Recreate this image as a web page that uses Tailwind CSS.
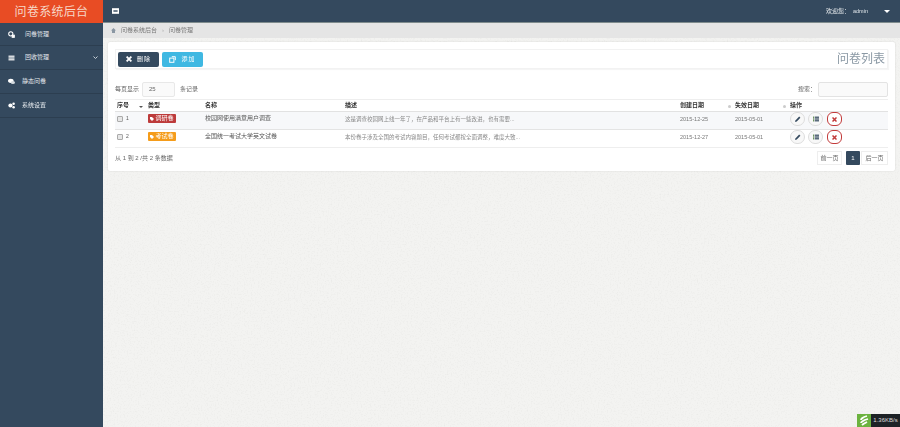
<!DOCTYPE html>
<html lang="zh">
<head>
  <meta charset="UTF-8" />
  <title>问卷系统后台</title>
  <script src="https://cdn.jsdelivr.net/npm/@tailwindcss/browser@4"></script>
</head>
<body class="bg-[#f3f3f1] text-[#555] font-['Liberation_Sans','Noto_Sans_CJK_SC',sans-serif] overflow-hidden">
  <!-- 背景纹理 -->
  <svg class="fixed inset-0 w-[900px] h-[427px]" xmlns="http://www.w3.org/2000/svg">
    <filter id="grain"><feTurbulence type="fractalNoise" baseFrequency="0.7" numOctaves="2" seed="4"/><feColorMatrix values="0 0 0 0 0.55  0 0 0 0 0.55  0 0 0 0 0.53  0 0 0 1.1 -0.55"/></filter>
    <rect width="900" height="427" filter="url(#grain)" opacity="0.35"/>
  </svg>

  <div class="relative flex w-[900px] h-[427px]">

    <!-- 侧边栏 -->
    <aside class="w-[103px] shrink-0 bg-[#34495e] text-[#e6eaee] text-[6px]">
      <div class="h-[23px] bg-[#e84c24] flex items-center justify-center text-[12px] tracking-[0.3px] text-[#f6d8c8] font-['Liberation_Serif','Noto_Sans_CJK_SC',serif]">问卷系统后台</div>
      <div class="h-[23px] flex items-center pl-[8px] gap-[10px] border-b border-[#2c3e50]">
        <svg class="w-[7px] h-[7px]" viewBox="0 0 10 10" fill="none" stroke="#fff" stroke-width="1.5"><circle cx="4" cy="4" r="3"/><rect x="6" y="6" width="3" height="3" fill="#fff"/></svg>
        <span>问卷管理</span>
      </div>
      <div class="h-[24px] flex items-center pl-[8px] pr-[5px] gap-[10px] border-b border-[#2c3e50]">
        <svg class="w-[7px] h-[6px]" viewBox="0 0 10 10" fill="#fff"><rect y="1" width="10" height="2"/><rect y="4" width="10" height="2"/><rect y="7" width="10" height="2"/></svg>
        <span>回收管理</span>
        <svg class="w-[5px] h-[5px] ml-auto" viewBox="0 0 10 10" fill="none" stroke="#c5ced6" stroke-width="2"><path d="M1 3l4 4 4-4"/></svg>
      </div>
      <div class="h-[24px] flex items-center pl-[8px] gap-[7px] border-b border-[#2c3e50]">
        <svg class="w-[7px] h-[7px]" viewBox="0 0 10 10" fill="#fff"><ellipse cx="4" cy="4" rx="4" ry="3"/><ellipse cx="7" cy="6.5" rx="3" ry="2.2" fill="#d5dbe0"/></svg>
        <span>静态问卷</span>
      </div>
      <div class="h-[24px] flex items-center pl-[8px] gap-[7px] border-b border-[#2c3e50]">
        <svg class="w-[7px] h-[7px]" viewBox="0 0 10 10" fill="#fff"><circle cx="3.5" cy="5" r="3"/><circle cx="8" cy="2.5" r="1.8"/><circle cx="8" cy="7.5" r="1.8"/></svg>
        <span>系统设置</span>
      </div>
    </aside>

    <div class="flex-1 min-w-0 flex flex-col">
      <!-- 顶栏 -->
      <header class="h-[23px] bg-[#34495e] border-b border-[#7f8c8d] flex items-center pl-[9px] text-[#eef1f3] text-[6px]">
        <svg class="w-[7px] h-[6px]" viewBox="0 0 10 8" fill="#fff"><rect width="10" height="8"/><rect x="2" y="3" width="6" height="2" fill="#34495e"/></svg>
        <span class="ml-auto">欢迎您：</span>
        <span class="ml-[3px] text-[#dfe5ea] w-[31px] text-[5.5px]">admin</span>
        <span class="w-0 h-0 mr-[10px] border-x-[3px] border-x-transparent border-t-[3px] border-t-white"></span>
      </header>

      <!-- 面包屑 -->
      <div class="h-[15px] bg-[#e5e5e5] flex items-center pl-[8px] gap-[5px] text-[6px] text-[#777]">
        <svg class="w-[5px] h-[5px]" viewBox="0 0 10 10" fill="#8a97a3"><path d="M5 0L0 5h2v5h6V5h2z"/></svg>
        <span>问卷系统后台</span>
        <span class="text-[#aaa]">›</span>
        <span>问卷管理</span>
      </div>

      <main class="pt-[4px] pl-[5px] pr-[5px]">
        <div class="h-[129px] bg-white rounded-[2px] shadow-[0_0_2px_rgba(0,0,0,0.12)] px-[7px] pt-[7px]">

          <!-- 工具栏 -->
          <div class="h-[20px] flex items-center pl-[2px] pr-[2px] gap-[3px] border border-[#f2f2f2] shadow-[1px_1px_1px_rgba(0,0,0,0.04)]">
            <button class="w-[41px] h-[15px] bg-[#34495e] rounded-[2px] text-white text-[6px] flex items-center justify-center gap-[5px]">
              <svg class="w-[6px] h-[6px]" viewBox="0 0 10 10" stroke="#fff" stroke-width="3"><path d="M1 1l8 8M9 1l-8 8"/></svg>
              <span class="tracking-[1px]">删除</span>
            </button>
            <button class="w-[41px] h-[15px] bg-[#3fb8e2] rounded-[2px] text-white text-[6px] flex items-center justify-center gap-[5px]">
              <svg class="w-[7px] h-[7px]" viewBox="0 0 10 10" fill="none" stroke="#fff" stroke-width="1.4"><rect x="1" y="3" width="6" height="6"/><path d="M4 1h5v5"/></svg>
              <span class="tracking-[1px]">添加</span>
            </button>
            <h2 class="ml-auto text-[12px] text-[#8a98a4] font-normal">问卷列表</h2>
          </div>

          <!-- 每页显示 / 搜索 -->
          <div class="h-[17px] mt-[12px] flex items-center text-[6px] text-[#666]">
            <span class="w-[27px]">每页显示</span>
            <span class="w-[33px] h-[15px] pl-[6px] flex items-center border border-[#e8e8e8] rounded-[2px] bg-[#fafafa]">25</span>
            <span class="ml-[5px]">条记录</span>
            <span class="ml-auto">搜索：</span>
            <span class="ml-[2px] w-[70px] h-[15px] border border-[#e3e3e3] rounded-[2px] bg-[#fafafa]"></span>
          </div>

          <!-- 表格 -->
          <table class="w-full table-fixed mt-[1px] text-[6px] border-t border-[#eee]">
            <thead>
              <tr class="h-[12px] border-b border-[#e2e2e2] text-left text-[#333]">
                <th class="w-[33px] pl-[2px] font-bold relative">序号<span class="absolute right-[5px] top-[6px] w-0 h-0 border-x-[2px] border-x-transparent border-t-[2px] border-t-[#555]"></span></th>
                <th class="w-[57px] font-bold">类型</th>
                <th class="w-[140px] font-bold">名称</th>
                <th class="w-[335px] font-bold">描述</th>
                <th class="w-[55px] font-bold relative">创建日期<span class="absolute right-[4px] top-[5px] w-[3px] h-[3px] rounded-full bg-[#ccc]"></span></th>
                <th class="w-[55px] font-bold relative">失效日期<span class="absolute right-[4px] top-[5px] w-[3px] h-[3px] rounded-full bg-[#ccc]"></span></th>
                <th class="font-bold">操作</th>
              </tr>
            </thead>
            <tbody>
              <tr class="h-[18px] bg-[#f7f8fa] border-b border-[#e4e4e4] align-top">
                <td class="pl-[2px] pt-[3px]"><span class="inline-flex items-center gap-[3px]"><span class="w-[6px] h-[6px] border border-[#aaa] rounded-[1px] bg-[#e6e6e6]"></span><span class="text-[5px]">1</span></span></td>
                <td class="pt-[2px]">
                  <span class="inline-flex w-[28px] h-[9px] items-center justify-center gap-[1px] rounded-[1px] bg-[#bd3b3b] text-white text-[6px]">
                    <svg class="w-[4px] h-[4px]" viewBox="0 0 10 10" fill="#fff"><path d="M0 0h5l5 5-5 5-5-5z"/></svg>调研卷
                  </span>
                </td>
                <td class="pt-[2px] text-[#555]">校园网使用满意用户调查</td>
                <td class="pt-[3px] text-[5.5px] text-[#888]">这是调查校园网上线一年了，在产品和平台上有一些改进，也有需要...</td>
                <td class="pt-[3px] text-[5.5px] text-[#777]">2015-12-25</td>
                <td class="pt-[3px] text-[5.5px] text-[#777]">2015-05-01</td>
                <td>
                  <div class="flex items-center gap-[3px]">
                    <span class="w-[15px] h-[14px] rounded-full border border-[#ddd] bg-[#f8f8f8] flex items-center justify-center">
                      <svg class="w-[6px] h-[6px]" viewBox="0 0 10 10" fill="#34495e"><path d="M7 1l2 2-6 6-3 1 1-3z"/></svg>
                    </span>
                    <span class="w-[15px] h-[14px] rounded-full border border-[#ddd] bg-[#f8f8f8] flex items-center justify-center">
                      <svg class="w-[6px] h-[6px]" viewBox="0 0 10 10" fill="#34495e"><rect y="1" width="2" height="2" fill="#4a7a3a"/><rect x="3" y="1" width="7" height="2"/><rect y="4" width="2" height="2" fill="#4a7a3a"/><rect x="3" y="4" width="7" height="2"/><rect y="7" width="2" height="2" fill="#4a7a3a"/><rect x="3" y="7" width="7" height="2"/></svg>
                    </span>
                    <span class="ml-[1px] w-[15px] h-[14px] rounded-[6px] border border-[#c23a3a] bg-white flex items-center justify-center">
                      <svg class="w-[5px] h-[5px]" viewBox="0 0 10 10" stroke="#c23a3a" stroke-width="3"><path d="M1 1l8 8M9 1l-8 8"/></svg>
                    </span>
                  </div>
                </td>
              </tr>
              <tr class="h-[18px] border-b border-[#eee] align-top">
                <td class="pl-[2px] pt-[3px]"><span class="inline-flex items-center gap-[3px]"><span class="w-[6px] h-[6px] border border-[#aaa] rounded-[1px] bg-[#e6e6e6]"></span><span class="text-[5px]">2</span></span></td>
                <td class="pt-[2px]">
                  <span class="inline-flex w-[28px] h-[9px] items-center justify-center gap-[1px] rounded-[1px] bg-[#f59c1a] text-white text-[6px]">
                    <svg class="w-[4px] h-[4px]" viewBox="0 0 10 10" fill="#fff"><path d="M0 0h5l5 5-5 5-5-5z"/></svg>考试卷
                  </span>
                </td>
                <td class="pt-[2px] text-[#555]">全国统一考试大学英文试卷</td>
                <td class="pt-[3px] text-[5.5px] text-[#888]">本份卷子涉及全国的考试内容题目，任何考试都按全面调整，难度大致...</td>
                <td class="pt-[3px] text-[5.5px] text-[#777]">2015-12-27</td>
                <td class="pt-[3px] text-[5.5px] text-[#777]">2015-05-01</td>
                <td>
                  <div class="flex items-center gap-[3px]">
                    <span class="w-[15px] h-[14px] rounded-full border border-[#ddd] bg-[#f8f8f8] flex items-center justify-center">
                      <svg class="w-[6px] h-[6px]" viewBox="0 0 10 10" fill="#34495e"><path d="M7 1l2 2-6 6-3 1 1-3z"/></svg>
                    </span>
                    <span class="w-[15px] h-[14px] rounded-full border border-[#ddd] bg-[#f8f8f8] flex items-center justify-center">
                      <svg class="w-[6px] h-[6px]" viewBox="0 0 10 10" fill="#34495e"><rect y="1" width="2" height="2" fill="#4a7a3a"/><rect x="3" y="1" width="7" height="2"/><rect y="4" width="2" height="2" fill="#4a7a3a"/><rect x="3" y="4" width="7" height="2"/><rect y="7" width="2" height="2" fill="#4a7a3a"/><rect x="3" y="7" width="7" height="2"/></svg>
                    </span>
                    <span class="ml-[1px] w-[15px] h-[14px] rounded-[6px] border border-[#c23a3a] bg-white flex items-center justify-center">
                      <svg class="w-[5px] h-[5px]" viewBox="0 0 10 10" stroke="#c23a3a" stroke-width="3"><path d="M1 1l8 8M9 1l-8 8"/></svg>
                    </span>
                  </div>
                </td>
              </tr>
            </tbody>
          </table>

          <!-- 分页 -->
          <div class="mt-[3px] flex items-center text-[6px] text-[#666]">
            <span>从 1 到 2 /共 2 条数据</span>
            <div class="ml-auto flex h-[14px]">
              <span class="w-[25px] flex items-center justify-center border border-[#eee]">前一页</span>
              <span class="ml-[4px] w-[14px] flex items-center justify-center bg-[#34495e] text-white rounded-[1px]">1</span>
              <span class="ml-[1px] w-[27px] flex items-center justify-center border border-[#eee]">后一页</span>
            </div>
          </div>
        </div>
      </main>
    </div>
  </div>

  <!-- 网速小组件 -->
  <div class="fixed right-0 bottom-0 flex h-[13px]">
    <span class="w-[14px] bg-[#6cb33f] flex items-center justify-center">
      <svg class="w-[10px] h-[11px]" viewBox="0 0 10 11" fill="none" stroke="#fff" stroke-width="1.8"><path d="M8 1C4 2 2 4 2 5M9 4C5 5 2 7 2 8M8 7C6 8 4 9 3 10"/></svg>
    </span>
    <span class="w-[29px] bg-[#1d2226] text-[#ddd] text-[6px] flex items-center justify-center">1.36KB/s</span>
  </div>
</body>
</html>
